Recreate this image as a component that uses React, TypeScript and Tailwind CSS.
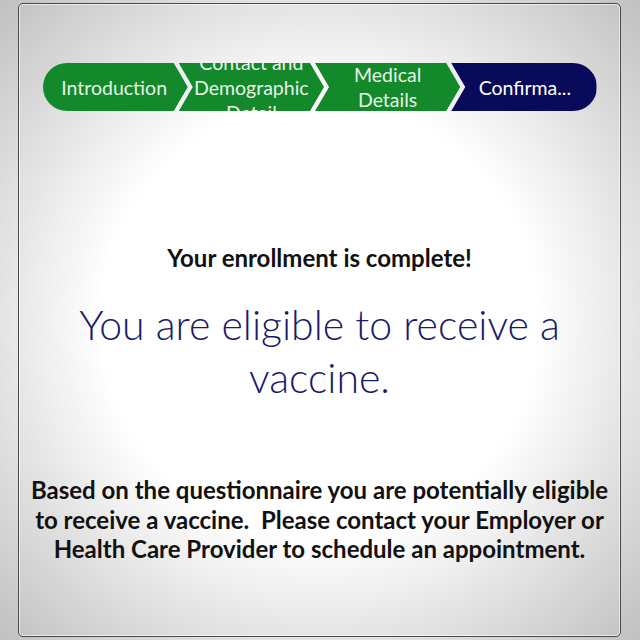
import React from "react";

const lato = { fontFamily: "Lato, 'Noto Sans', sans-serif" };

export default function App() {
  return (
    <div
      className="w-[640px] h-[640px] bg-[radial-gradient(ellipse_at_center,#ffffff_48%,#c0c0c0_100%)] pt-[3px] pl-[18px]"
      style={lato}
    >
      <div className="w-[603px] h-[634px] rounded-[5px] border-[1.5px] border-[#4a4a4a] shadow-[inset_0_0_0_1px_rgba(255,255,255,0.6)] flex flex-col items-center">
        {/* stepper */}
        <div className="mt-[59px] w-[554px] h-[48px] flex text-[19.5px] leading-[25px]">
          <div className="flex-1 h-full rounded-l-full bg-[#13892b] text-[#e6f4e6] flex items-center justify-center [clip-path:polygon(0_0,calc(100%-14px)_0,100%_50%,calc(100%-14px)_100%,0_100%)]">
            <span className="pr-[2px]">Introduction</span>
          </div>
          <div className="flex-1 -ml-[9px] h-full overflow-hidden bg-[#13892b] text-[#e6f4e6] flex flex-col items-center justify-center text-center [clip-path:polygon(0_0,calc(100%-14px)_0,100%_50%,calc(100%-14px)_100%,0_100%,14px_50%)]">
            <span className="block whitespace-nowrap">Contact and</span>
            <span className="block whitespace-nowrap">Demographic</span>
            <span className="block whitespace-nowrap">Detail</span>
          </div>
          <div className="flex-1 -ml-[9px] h-full bg-[#13892b] text-[#e6f4e6] flex flex-col items-center justify-center text-center [clip-path:polygon(0_0,calc(100%-14px)_0,100%_50%,calc(100%-14px)_100%,0_100%,14px_50%)]">
            <span className="block">Medical</span>
            <span className="block">Details</span>
          </div>
          <div className="flex-1 -ml-[9px] h-full rounded-r-full bg-[#0a0a5a] text-white flex items-center justify-center [clip-path:polygon(0_0,100%_0,100%_100%,0_100%,14px_50%)]">
            <span className="pl-[2px]">Confirma...</span>
          </div>
        </div>

        <div className="mt-[132px] text-[24px] leading-[30px] font-bold text-[#111111]">
          Your enrollment is complete!
        </div>

        <div className="mt-[25px] w-[510px] text-center text-[41px] leading-[53px] font-light text-[#1a1a6a]">
          You are eligible to receive a vaccine.
        </div>

        <div className="mt-[71px] w-[590px] text-center text-[24px] leading-[29.5px] font-bold text-[#111111]">
          Based on the questionnaire you are potentially eligible to receive a vaccine.&nbsp; Please contact your Employer or Health Care Provider to schedule an appointment.
        </div>
      </div>
    </div>
  );
}
